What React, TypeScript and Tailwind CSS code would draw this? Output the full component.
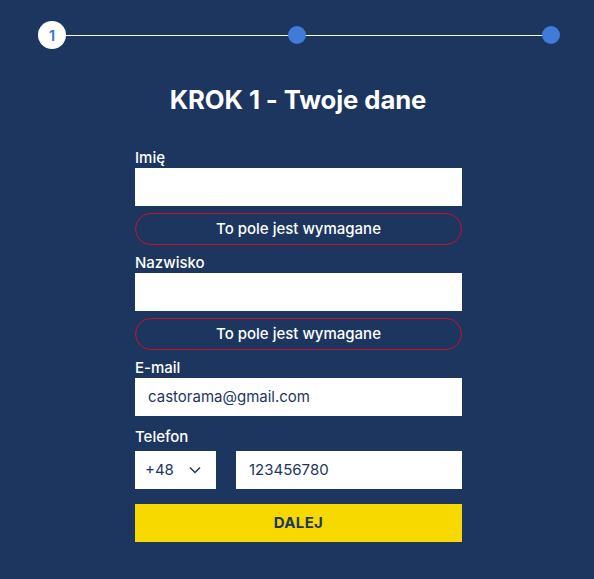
import React from "react";

export default function App() {
  const font = { fontFamily: "Inter, 'Noto Sans', sans-serif" };
  return (
    <div className="w-[594px] h-[579px] bg-[#1c3660] text-white" style={font}>
      <div className="relative h-[72px]">
        <div className="absolute left-[52px] right-[43px] top-[35px] h-px bg-white" />
        <div className="absolute left-[38px] top-[21px] w-[28px] h-[28px] rounded-full bg-white flex items-center justify-center text-[14px] font-bold text-[#3f7bd8]">1</div>
        <div className="absolute left-[288px] top-[26px] w-[18px] h-[18px] rounded-full bg-[#3f7bd8]" />
        <div className="absolute left-[542px] top-[26px] w-[18px] h-[18px] rounded-full bg-[#3f7bd8]" />
      </div>
      <h1 className="text-center text-[25.7px] font-bold leading-[32px] mt-[12px] tracking-[-0.1px] pl-[2px]">KROK 1 - Twoje dane</h1>
      <div className="w-[327px] ml-[135px] mt-[32px] flex flex-col">
        <label className="text-[15px] leading-[20px] font-medium">Imię</label>
        <div className="h-[38px] bg-white" />
        <div className="mt-[7px] h-[32px] rounded-full border border-[#c8102e] flex items-center justify-center text-[15px] font-medium">To pole jest wymagane</div>
        <label className="mt-[8px] text-[15px] leading-[20px] font-medium">Nazwisko</label>
        <div className="h-[38px] bg-white" />
        <div className="mt-[7px] h-[32px] rounded-full border border-[#c8102e] flex items-center justify-center text-[15px] font-medium">To pole jest wymagane</div>
        <label className="mt-[8px] text-[15px] leading-[20px] font-medium">E-mail</label>
        <div className="h-[38px] bg-white flex items-center px-[13px] text-[15px] text-[#1c3660]">castorama@gmail.com</div>
        <label className="mt-[11px] text-[15px] leading-[20px] font-medium">Telefon</label>
        <div className="mt-[4px] flex gap-[20px]">
          <div className="w-[81px] h-[38px] bg-white flex items-center px-[10px] text-[15px] text-[#1c3660] justify-between">
            <span>+48</span>
            <svg width="12" height="8" viewBox="0 0 12 8" fill="none" stroke="#1c3660" strokeWidth="1.5" className="mr-[5px]"><path d="M1 1.5l5 5 5-5" /></svg>
          </div>
          <div className="flex-1 h-[38px] bg-white flex items-center px-[13px] text-[15px] text-[#1c3660]">123456780</div>
        </div>
        <button className="mt-[15px] h-[38px] bg-[#f7d900] text-[#1c3660] font-bold text-[15px] tracking-[0.3px]">DALEJ</button>
      </div>
    </div>
  );
}
